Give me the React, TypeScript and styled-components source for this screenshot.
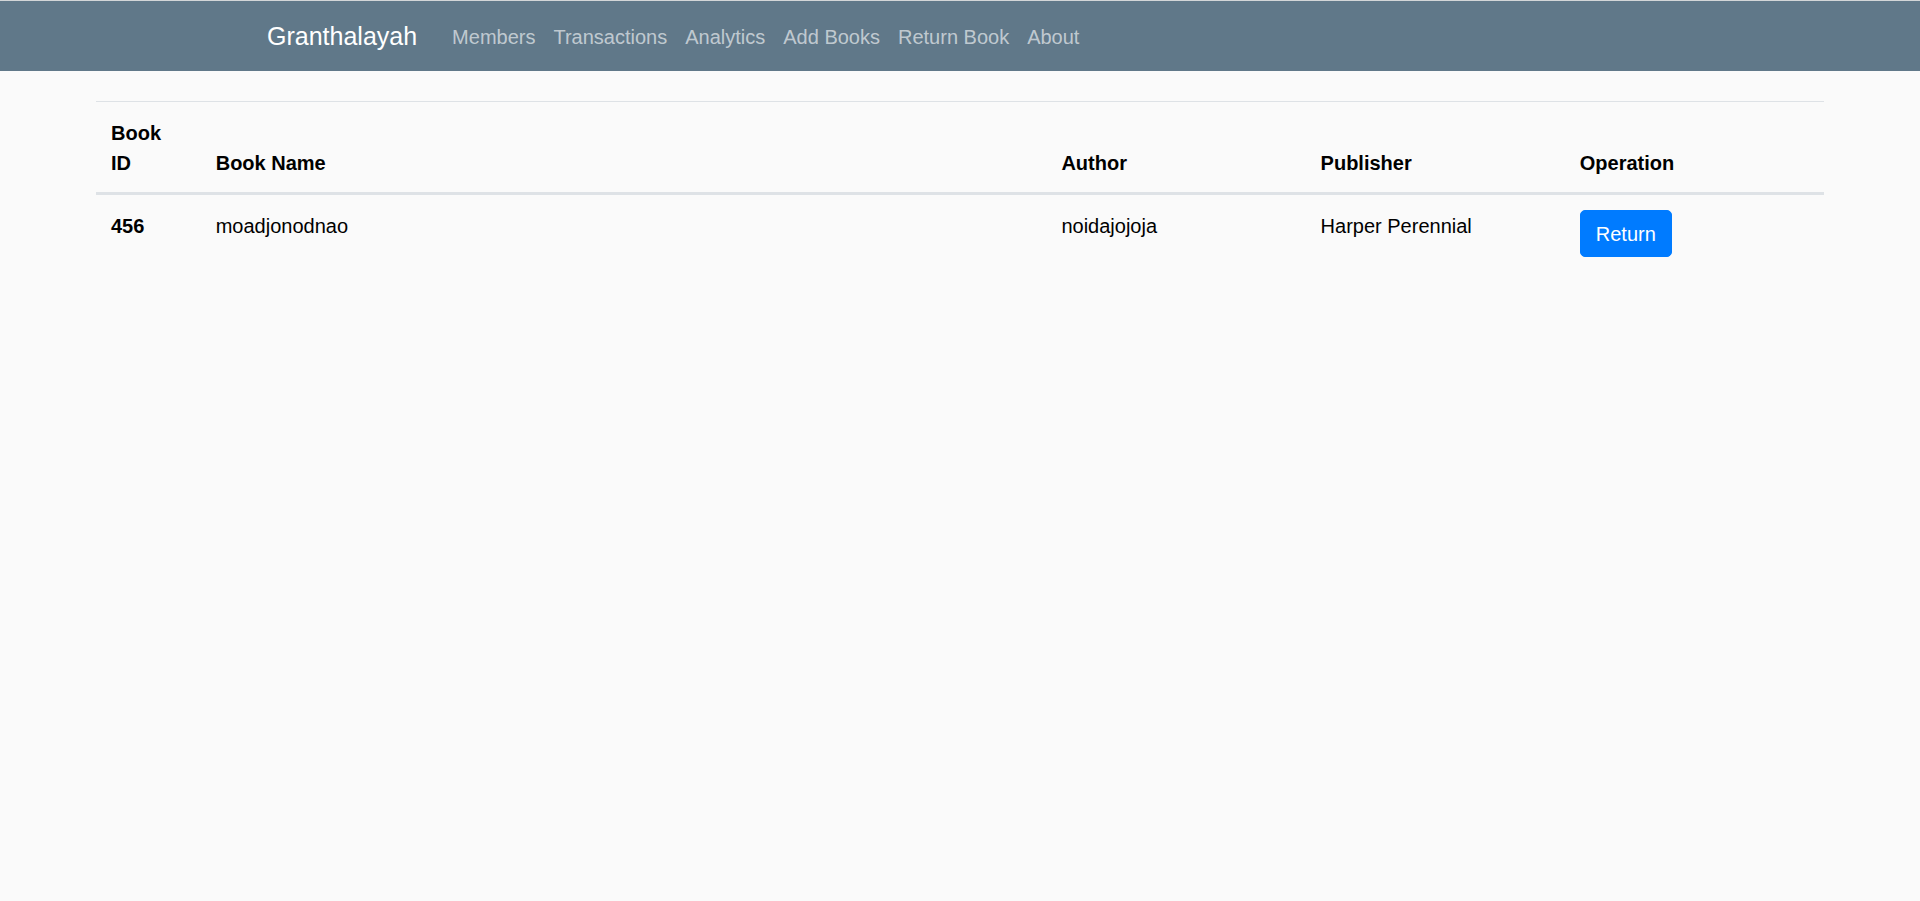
import React from "react";
import styled, { createGlobalStyle } from "styled-components";

const GlobalStyle = createGlobalStyle`
  html, body {
    margin: 0;
    padding: 0;
    background: #fafafa;
  }
  body {
    font-family: "Liberation Sans", Arial, sans-serif;
    font-size: 20px;
    line-height: 1.5;
    color: #212529;
  }
  * { box-sizing: border-box; }
`;

const Page = styled.div`
  min-height: 901px;
  border-top: 1px solid #d3d6d8;
  background: #fafafa;
`;

const NavBar = styled.nav`
  height: 70px;
  background: #607889;
  display: flex;
  align-items: center;
  padding-left: 267px;
  padding-top: 2px;
`;

const Brand = styled.a`
  color: #ffffff;
  font-size: 25px;
  line-height: 1.5;
  margin-right: 26px;
  text-decoration: none;
  white-space: nowrap;
`;

const NavList = styled.ul`
  display: flex;
  list-style: none;
  margin: 0;
  padding: 0;
`;

const NavLink = styled.a`
  display: block;
  padding: 7.5px 9px;
  color: rgba(255, 255, 255, 0.62);
  font-size: 20px;
  line-height: 1.5;
  text-decoration: none;
  white-space: nowrap;
`;

const Main = styled.main`
  width: 90%;
  margin: 30px auto 0;
`;

const Table = styled.table`
  width: 100%;
  border-collapse: collapse;
  table-layout: fixed;
  color: #000;
`;

const HeadCell = styled.th<{ $w: string }>`
  width: ${(p) => p.$w};
  text-align: left;
  vertical-align: bottom;
  font-weight: 700;
  padding: 16px 15px 14px;
  border-top: 1px solid #dee2e6;
  border-bottom: 3px solid #dee2e6;
`;

const Cell = styled.td<{ $bold?: boolean; $control?: boolean }>`
  padding: ${(p) => (p.$control ? "15px" : "16px 15px 14px")};
  vertical-align: top;
  font-weight: ${(p) => (p.$bold ? 700 : 400)};
`;

const ReturnButton = styled.button`
  font-family: inherit;
  font-size: 20px;
  line-height: 1.5;
  padding: 7.5px 15px;
  color: #fff;
  background: #007bff;
  border: 1.25px solid #007bff;
  border-radius: 5px;
  cursor: pointer;
`;

const links = ["Members", "Transactions", "Analytics", "Add Books", "Return Book", "About"];

const columns = [
  { label: "Book ID", w: "6.06%" },
  { label: "Book Name", w: "48.94%" },
  { label: "Author", w: "15%" },
  { label: "Publisher", w: "15%" },
  { label: "Operation", w: "15%" },
];

const rows = [
  { id: "456", name: "moadjonodnao", author: "noidajojoja", publisher: "Harper Perennial" },
];

export default function App() {
  return (
    <Page>
      <GlobalStyle />
      <NavBar>
        <Brand href="#">Granthalayah</Brand>
        <NavList>
          {links.map((l) => (
            <li key={l}>
              <NavLink href="#">{l}</NavLink>
            </li>
          ))}
        </NavList>
      </NavBar>
      <Main>
        <Table>
          <thead>
            <tr>
              {columns.map((c) => (
                <HeadCell key={c.label} $w={c.w}>
                  {c.label}
                </HeadCell>
              ))}
            </tr>
          </thead>
          <tbody>
            {rows.map((r) => (
              <tr key={r.id}>
                <Cell $bold>{r.id}</Cell>
                <Cell>{r.name}</Cell>
                <Cell>{r.author}</Cell>
                <Cell>{r.publisher}</Cell>
                <Cell $control>
                  <ReturnButton>Return</ReturnButton>
                </Cell>
              </tr>
            ))}
          </tbody>
        </Table>
      </Main>
    </Page>
  );
}
